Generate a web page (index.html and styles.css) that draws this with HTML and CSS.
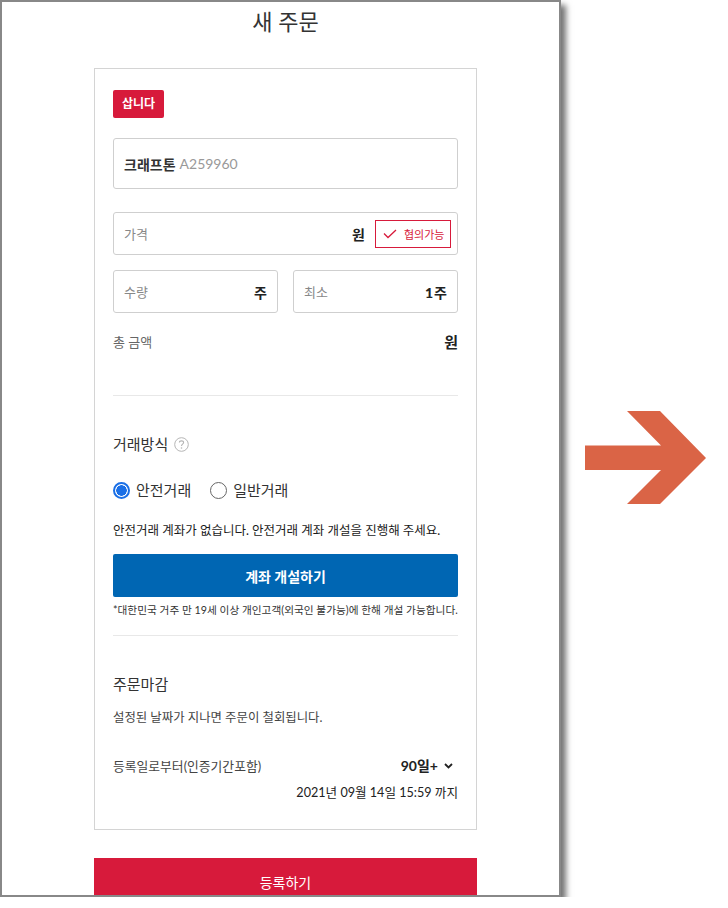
FILE: index.html
```html
<!DOCTYPE html>
<html lang="ko">

<head>
    <meta charset="UTF-8">
    <meta name="viewport" content="width=device-width, initial-scale=1.0">
    <title>새 주문</title>
    <link rel="stylesheet" href="styles.css">
</head>

<body>
    <div class="screen">
        <h1 class="title">새 주문</h1>
        <div class="order">
            <div class="card">
                <span class="badge">삽니다</span>

                <div class="field stock">
                    <b>크래프톤</b><span class="code">A259960</span>
                </div>

                <div class="field price">
                    <span class="label">가격</span>
                    <span class="unit">원</span>
                    <span class="nego">
                        <svg width="14" height="10" viewBox="0 0 14 10"><path d="M1 4.5 L5 8.5 L13 1" fill="none" stroke="#d71a3b" stroke-width="1.3"/></svg>
                        협의가능
                    </span>
                </div>

                <div class="field-row">
                    <div class="field">
                        <span class="label">수량</span>
                        <span class="unit">주</span>
                    </div>
                    <div class="field">
                        <span class="label">최소</span>
                        <span class="unit"><b class="num">1</b>주</span>
                    </div>
                </div>

                <div class="total">
                    <span>총 금액</span>
                    <b>원</b>
                </div>

                <hr class="divider">

                <h2 class="section-title">거래방식
                    <svg class="help" width="15" height="15" viewBox="0 0 15 15">
                        <circle cx="7.5" cy="7.5" r="6.8" fill="none" stroke="#b5b5b5" stroke-width="1"/>
                        <path d="M5.4 5.6 C5.4 3.3 9.6 3.3 9.6 5.6 C9.6 7.2 7.5 7.1 7.5 9" fill="none" stroke="#b5b5b5" stroke-width="1.1"/>
                        <circle cx="7.5" cy="11" r="0.8" fill="#b5b5b5"/>
                    </svg>
                </h2>

                <div class="radios">
                    <span class="radio checked"><i></i>안전거래</span>
                    <span class="radio"><i></i>일반거래</span>
                </div>

                <p class="info">안전거래 계좌가 없습니다. 안전거래 계좌 개설을 진행해 주세요.</p>
                <button class="btn-account">계좌 개설하기</button>
                <p class="note">*대한민국 거주 만 19세 이상 개인고객(외국인 불가능)에 한해 개설 가능합니다.</p>

                <hr class="divider">

                <h2 class="section-title">주문마감</h2>
                <p class="desc">설정된 날짜가 지나면 주문이 철회됩니다.</p>

                <div class="deadline">
                    <span>등록일로부터(인증기간포함)</span>
                    <span class="period">90일+
                        <svg width="9" height="6" viewBox="0 0 9 6"><path d="M1 1 L4.5 4.5 L8 1" fill="none" stroke="#222" stroke-width="1.8"/></svg>
                    </span>
                </div>
                <div class="date">2021년 09월 14일 15:59 까지</div>
            </div>

            <button class="btn-submit">등록하기</button>
        </div>
    </div>

    <svg class="arrow" width="121" height="93" viewBox="0 0 121 93">
        <polygon points="0,34.5 76,34.5 42,0 75,0 121,47 75,93 42,93 76,59 0,59" fill="#da6446"/>
    </svg>
</body>

</html>
```

FILE: styles.css
```css
body {
    margin: 0;
    display: flex;
    align-items: flex-start;
    background-color: #fff;
    font-family: Lato, "Noto Sans CJK KR", sans-serif;
    color: #222;
}

.screen {
    width: 557px;
    height: 893px;
    border: 2px solid #888;
    box-shadow: 5px 5px 6px rgba(0, 0, 0, 0.55);
    overflow: hidden;
    background-color: #fff;
}

.title {
    margin: 0;
    height: 66px;
    line-height: 40px;
    padding-left: 92px;
    width: 383px;
    text-align: center;
    font-size: 22px;
    font-weight: normal;
    color: #333;
}

.order {
    width: 383px;
    margin-left: 92px;
}

.card {
    border: 1px solid #d4d4d4;
    padding: 21px 18px 26px;
}

.badge {
    display: inline-block;
    width: 51px;
    height: 28px;
    line-height: 28px;
    text-align: center;
    background-color: #d71a3b;
    color: #fff;
    font-size: 12px;
    font-weight: bold;
    border-radius: 2px;
}

.field {
    display: flex;
    align-items: center;
    box-sizing: border-box;
    height: 43px;
    border: 1px solid #cfcfcf;
    border-radius: 3px;
    padding: 0 10px 0 10px;
    font-size: 13px;
}

.field .label {
    flex: 1;
    color: #888;
}

.field .unit {
    font-weight: bold;
    font-size: 14px;
    color: #222;
}

.stock {
    margin-top: 20px;
    height: 51px;
    font-size: 14px;
}

.stock b {
    color: #333;
}

.stock .code {
    margin-left: 4px;
    color: #999;
}

.price {
    margin-top: 23px;
    padding-right: 6px;
}

.nego {
    display: flex;
    align-items: center;
    gap: 7px;
    width: 76px;
    height: 28px;
    box-sizing: border-box;
    margin-left: 10px;
    padding-left: 7px;
    border: 1px solid #d71a3b;
    color: #d71a3b;
    font-size: 11px;
}

.field-row {
    display: flex;
    gap: 15px;
    margin-top: 15px;
}

.field-row .field {
    flex: 1;
}

.num {
    font-family: Lato, sans-serif;
    font-weight: 900;
    margin-right: 1px;
}

.total {
    display: flex;
    justify-content: space-between;
    align-items: center;
    margin-top: 19px;
    line-height: 20px;
    font-size: 13px;
    color: #666;
}

.total b {
    font-size: 15px;
    color: #222;
}

.divider {
    border: none;
    border-top: 1px solid #e8e8e8;
    margin: 43px 0 0;
}

.section-title {
    display: flex;
    align-items: center;
    gap: 6px;
    margin: 37px 0 0;
    line-height: 22px;
    font-size: 15px;
    font-weight: normal;
    color: #333;
}

.radios {
    display: flex;
    gap: 19px;
    margin-top: 24px;
    line-height: 22px;
    font-size: 15px;
    color: #333;
}

.radio {
    display: flex;
    align-items: center;
    gap: 6px;
}

.radio i {
    width: 17px;
    height: 17px;
    border: 1px solid #666;
    border-radius: 50%;
    box-sizing: border-box;
}

.radio.checked i {
    border: 2px solid #1a6fe6;
    background: radial-gradient(circle, #1a6fe6 0 5px, #fff 5.5px);
}

.info {
    margin: 20px 0 0;
    line-height: 20px;
    font-size: 12.5px;
    color: #1a1a1a;
}

.btn-account {
    display: block;
    width: 100%;
    height: 43px;
    margin-top: 13px;
    border: none;
    border-radius: 2px;
    background-color: #0066b3;
    color: #fff;
    font-family: inherit;
    font-size: 14px;
    font-weight: bold;
}

.note {
    margin: 5px 0 0;
    line-height: 16px;
    font-size: 10.7px;
    color: #333;
    white-space: nowrap;
}

.note + .divider {
    margin-top: 17px;
}

.desc {
    margin: 13px 0 0;
    line-height: 20px;
    font-size: 12.4px;
    color: #444;
}

.deadline {
    display: flex;
    justify-content: space-between;
    align-items: center;
    margin-top: 28px;
    line-height: 20px;
    font-size: 12.8px;
    color: #444;
}

.period {
    display: flex;
    align-items: center;
    gap: 6px;
    margin-right: 5px;
    font-weight: bold;
    font-size: 14px;
    color: #222;
}

.date {
    margin-top: 7px;
    line-height: 20px;
    text-align: right;
    font-size: 12.6px;
    color: #222;
}

.btn-submit {
    display: block;
    width: 100%;
    height: 48px;
    margin-top: 28px;
    border: none;
    background-color: #d71a3b;
    color: #fff;
    font-family: inherit;
    font-size: 14px;
}

.arrow {
    margin: 411px 0 0 24px;
}
```
